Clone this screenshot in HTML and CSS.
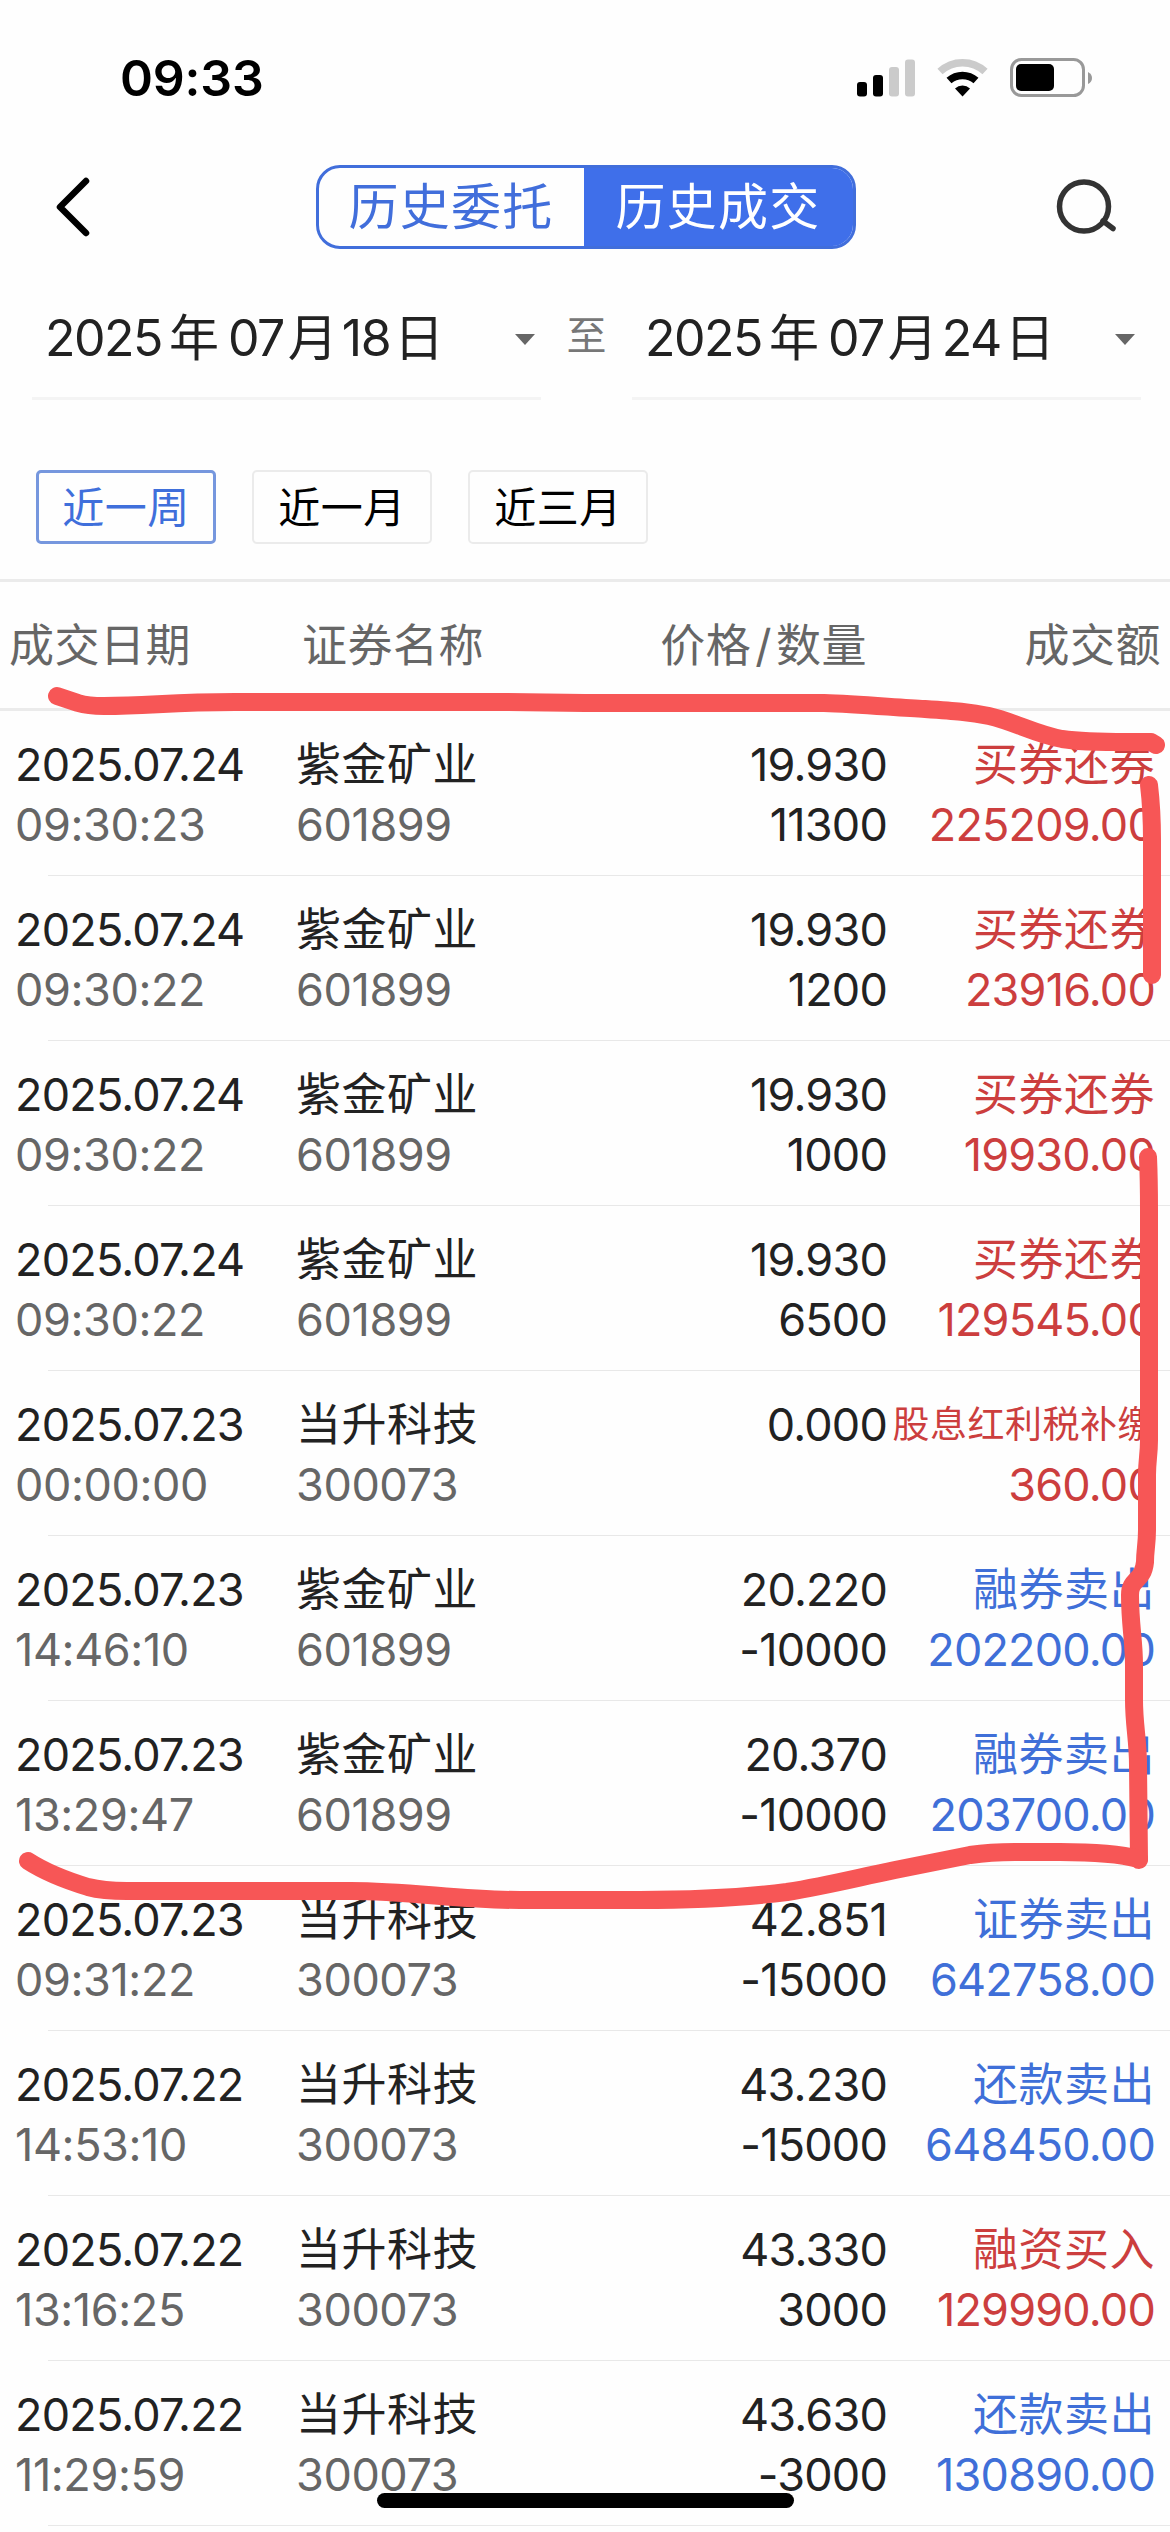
FILE: index.html
```html
<!DOCTYPE html>
<html lang="zh-CN">
  <head>
    <meta charset="UTF-8" />
    <meta name="viewport" content="width=device-width, initial-scale=1.0" />
    <title>历史成交</title>
    <link rel="stylesheet" href="styles.css">
  </head>
  <body>
    <div class="status-bar">
      <div class="clock">09:33</div>
      <svg class="status-icons" width="240" height="44" viewBox="854 56 240 44">
        <rect x="856" y="82" width="10" height="14.5" rx="3" />
        <rect x="872" y="75" width="10" height="21.5" rx="3" />
        <rect x="888" y="67" width="10" height="29.5" rx="3" fill="#cbcbcb" />
        <rect x="904" y="59.5" width="10" height="37" rx="3" fill="#cbcbcb" />
        <path d="M939 71.5A33 33 0 0 1 984 71.5" fill="none" stroke="#cbcbcb" stroke-width="7.5" />
        <path d="M948 80.5A20.5 20.5 0 0 1 975 80.5" fill="none" stroke="#000" stroke-width="7.5" />
        <path d="M954 88.5A11 11 0 0 1 969 88.5L961.500 96.500Z" />
        <rect x="1010.500" y="59.500" width="72" height="36" rx="10" fill="none" stroke="#999" stroke-width="3" />
        <rect x="1015" y="64" width="38" height="27" rx="5" />
        <path d="M1087 72Q1091 74 1091 78T1087 84Z" fill="#999" />
      </svg>
    </div>

    <div class="nav-bar">
      <svg class="back-icon" width="40" height="64" viewBox="0 0 40 64">
        <path d="M33 6L7 32L33 58" />
      </svg>
      <div class="segment">
        <div class="segment-item">历史委托</div>
        <div class="segment-item active">历史成交</div>
      </div>
      <svg class="search-icon" width="64" height="60" viewBox="0 0 64 60">
        <circle cx="30" cy="29.500" r="24.500" />
        <path d="M49 44L59 51.500" />
      </svg>
    </div>

    <div class="date-range">
      <div class="date-field">
        <div class="date-text"><span>2025</span><i class="year">年</i><span>07</span><i>月</i><span>18</span><i>日</i></div>
        <div class="caret"></div>
      </div>
      <div class="date-to">至</div>
      <div class="date-field">
        <div class="date-text"><span>2025</span><i class="year">年</i><span>07</span><i>月</i><span>24</span><i>日</i></div>
        <div class="caret"></div>
      </div>
    </div>

    <div class="quick-range">
      <div class="quick-item active">近一周</div>
      <div class="quick-item">近一月</div>
      <div class="quick-item">近三月</div>
    </div>

    <div class="list-header">
      <div>成交日期</div>
      <div>证券名称</div>
      <div class="right">价格<span class="slash">/</span>数量</div>
      <div class="right">成交额</div>
    </div>

    <div class="record-list">
      <div class="record">
        <div class="date">2025.07.24<br><span class="sub">09:30:23</span></div>
        <div class="name">紫金矿业<br><span class="sub">601899</span></div>
        <div class="price">19.930<br>11300</div>
        <div class="amount buy"><b>买券还券</b><br>225209.00</div>
      </div>
      <div class="record">
        <div class="date">2025.07.24<br><span class="sub">09:30:22</span></div>
        <div class="name">紫金矿业<br><span class="sub">601899</span></div>
        <div class="price">19.930<br>1200</div>
        <div class="amount buy"><b>买券还券</b><br>23916.00</div>
      </div>
      <div class="record">
        <div class="date">2025.07.24<br><span class="sub">09:30:22</span></div>
        <div class="name">紫金矿业<br><span class="sub">601899</span></div>
        <div class="price">19.930<br>1000</div>
        <div class="amount buy"><b>买券还券</b><br>19930.00</div>
      </div>
      <div class="record">
        <div class="date">2025.07.24<br><span class="sub">09:30:22</span></div>
        <div class="name">紫金矿业<br><span class="sub">601899</span></div>
        <div class="price">19.930<br>6500</div>
        <div class="amount buy"><b>买券还券</b><br>129545.00</div>
      </div>
      <div class="record">
        <div class="date">2025.07.23<br><span class="sub">00:00:00</span></div>
        <div class="name">当升科技<br><span class="sub">300073</span></div>
        <div class="price">0.000</div>
        <div class="amount buy"><b class="long">股息红利税补缴</b><br>360.00</div>
      </div>
      <div class="record">
        <div class="date">2025.07.23<br><span class="sub">14:46:10</span></div>
        <div class="name">紫金矿业<br><span class="sub">601899</span></div>
        <div class="price">20.220<br>-10000</div>
        <div class="amount sell"><b>融券卖出</b><br>202200.00</div>
      </div>
      <div class="record">
        <div class="date">2025.07.23<br><span class="sub">13:29:47</span></div>
        <div class="name">紫金矿业<br><span class="sub">601899</span></div>
        <div class="price">20.370<br>-10000</div>
        <div class="amount sell"><b>融券卖出</b><br>203700.00</div>
      </div>
      <div class="record">
        <div class="date">2025.07.23<br><span class="sub">09:31:22</span></div>
        <div class="name">当升科技<br><span class="sub">300073</span></div>
        <div class="price">42.851<br>-15000</div>
        <div class="amount sell"><b>证券卖出</b><br>642758.00</div>
      </div>
      <div class="record">
        <div class="date">2025.07.22<br><span class="sub">14:53:10</span></div>
        <div class="name">当升科技<br><span class="sub">300073</span></div>
        <div class="price">43.230<br>-15000</div>
        <div class="amount sell"><b>还款卖出</b><br>648450.00</div>
      </div>
      <div class="record">
        <div class="date">2025.07.22<br><span class="sub">13:16:25</span></div>
        <div class="name">当升科技<br><span class="sub">300073</span></div>
        <div class="price">43.330<br>3000</div>
        <div class="amount buy"><b>融资买入</b><br>129990.00</div>
      </div>
      <div class="record">
        <div class="date">2025.07.22<br><span class="sub">11:29:59</span></div>
        <div class="name">当升科技<br><span class="sub">300073</span></div>
        <div class="price">43.630<br>-3000</div>
        <div class="amount sell"><b>还款卖出</b><br>130890.00</div>
      </div>
    </div>

    <!-- hand-drawn marker around the first seven records -->
    <svg class="marker" width="1170" height="2532" viewBox="0 0 1170 2532">
      <path d="M57 696L78 703Q88 706 104 706C150 706 170 702 235 702H500L585 703H824C860 704 900 708 925 709C955 711 970 712 989 716C1015 722 1035 734 1062 739C1090 743 1115 742 1151 742L1156 745" />
      <path d="M1149 785Q1152 810 1152 840V975" />
      <path d="M1148 1157Q1149 1180 1149 1210V1440C1149 1455 1147 1460 1147 1475V1530C1147 1545 1145 1550 1145 1562C1143 1582 1130 1578 1130 1595C1130 1625 1134 1640 1134 1665V1700C1134 1725 1138 1740 1138 1765L1139 1860" />
      <path d="M28 1861C45 1872 65 1880 88 1887Q103 1891 127 1891H351C410 1891 460 1900 520 1900H640C700 1900 740 1898 787 1892C830 1885 860 1877 895 1870L970 1855Q990 1852 1015 1852H1060C1090 1852 1120 1854 1139 1859" />
    </svg>

    <div class="home-indicator"></div>
  </body>
</html>
```
FILE: styles.css
```css
body {
  margin: 0;
  width: 1170px;
  height: 2532px;
  overflow: hidden;
  position: relative;
  background: #fefefe;
  color: #222;
  font-family: Inter, "Noto Sans CJK SC", sans-serif;
}

.status-bar {
  display: flex;
  justify-content: space-between;
  align-items: center;
  height: 156px;
  padding: 0 75px 0 120px;
  box-sizing: border-box;
}

.clock {
  font-size: 50px;
  font-weight: 600;
  letter-spacing: -0.2px;
  color: #000;
}

.nav-bar {
  display: flex;
  justify-content: space-between;
  align-items: center;
  height: 102px;
  padding: 0 52px 0 53px;
}

.back-icon path {
  fill: none;
  stroke: #000;
  stroke-width: 6.5;
  stroke-linecap: round;
  stroke-linejoin: round;
}

.search-icon path,
.search-icon circle {
  fill: none;
  stroke: #333;
  stroke-width: 5.5;
  stroke-linecap: round;
}

.segment {
  display: flex;
  width: 540px;
  height: 84px;
  box-sizing: border-box;
  margin-left: 24px;
  border: 3px solid #416edb;
  border-radius: 24px;
  overflow: hidden;
}

.segment-item {
  width: 265px;
  text-align: center;
  font-size: 50px;
  line-height: 79px;
  letter-spacing: 1.3px;
  color: #416edb;
}

.segment-item.active {
  flex: 1;
  background: #3f6fea;
  color: #fff;
}

.date-range {
  display: flex;
  justify-content: space-between;
  height: 142px;
  padding: 0 29px 0 32px;
}

.date-field {
  display: flex;
  justify-content: space-between;
  align-items: center;
  width: 509px;
  box-sizing: border-box;
  padding: 12px 6px 0 13px;
  border-bottom: 3px solid #f4f4f4;
}

.date-text {
  display: flex;
  align-items: baseline;
  font-size: 50px;
}

.date-text span {
  letter-spacing: -1.5px;
}

.date-text i {
  font-style: normal;
  width: 50px;
  margin: 0 4px 0 4px;
}

.date-text .year {
  margin: 0 9px 0 7px;
}

.caret {
  border: 10.5px solid transparent;
  border-top: 11px solid #666;
  border-bottom: 0;
  margin-top: 12px;
}

.date-to {
  font-size: 40px;
  line-height: 156px;
  color: #777;
}

.quick-range {
  display: flex;
  gap: 36px;
  padding: 70px 36px 35px;
  border-bottom: 3px solid #ebebeb;
}

.quick-item {
  width: 180px;
  height: 74px;
  box-sizing: border-box;
  border: 2px solid #ebebeb;
  border-radius: 5px;
  text-align: center;
  font-size: 42px;
  line-height: 71px;
  letter-spacing: 0.5px;
  color: #000;
}

.quick-item.active {
  border: 3px solid #7697de;
  line-height: 69px;
  color: #3f6fdb;
}

.list-header {
  display: grid;
  grid-template-columns: 293px 280px 285px 1fr;
  height: 126px;
  padding: 0 9px 0 9px;
  border-bottom: 3px solid #ebebeb;
  font-size: 45px;
  line-height: 128px;
  letter-spacing: 0.5px;
  color: #666;
}

.right {
  text-align: right;
}

.slash {
  margin: 0 4px;
}

.record {
  display: grid;
  grid-template-columns: 281px 240px 351px 1fr;
  height: 165px;
  box-sizing: border-box;
  padding: 24px 15px 0 15px;
  font-size: 45px;
  line-height: 60px;
  white-space: nowrap;
  letter-spacing: -0.8px;
  background: linear-gradient(#e8e8e8, #e8e8e8) 48px 100% / 100% 1px no-repeat;
}

.name {
  letter-spacing: 0.5px;
}

.sub {
  color: #666;
  letter-spacing: -0.4px;
}

.price,
.amount {
  text-align: right;
}

.amount b {
  font-weight: 400;
  letter-spacing: 0.5px;
}

.amount .long {
  display: inline-block;
  height: 60px;
  font-size: 37px;
  vertical-align: top;
}

.buy {
  color: #cc3e3e;
}

.sell {
  color: #3f6fd8;
}

.marker {
  position: absolute;
  left: 0;
  top: 0;
}

.marker path {
  fill: none;
  stroke: #f75656;
  stroke-width: 18;
  stroke-linecap: round;
  stroke-linejoin: round;
}

.home-indicator {
  position: absolute;
  left: 377px;
  bottom: 24px;
  width: 417px;
  height: 15px;
  border-radius: 8px;
  background: #000;
}
```
